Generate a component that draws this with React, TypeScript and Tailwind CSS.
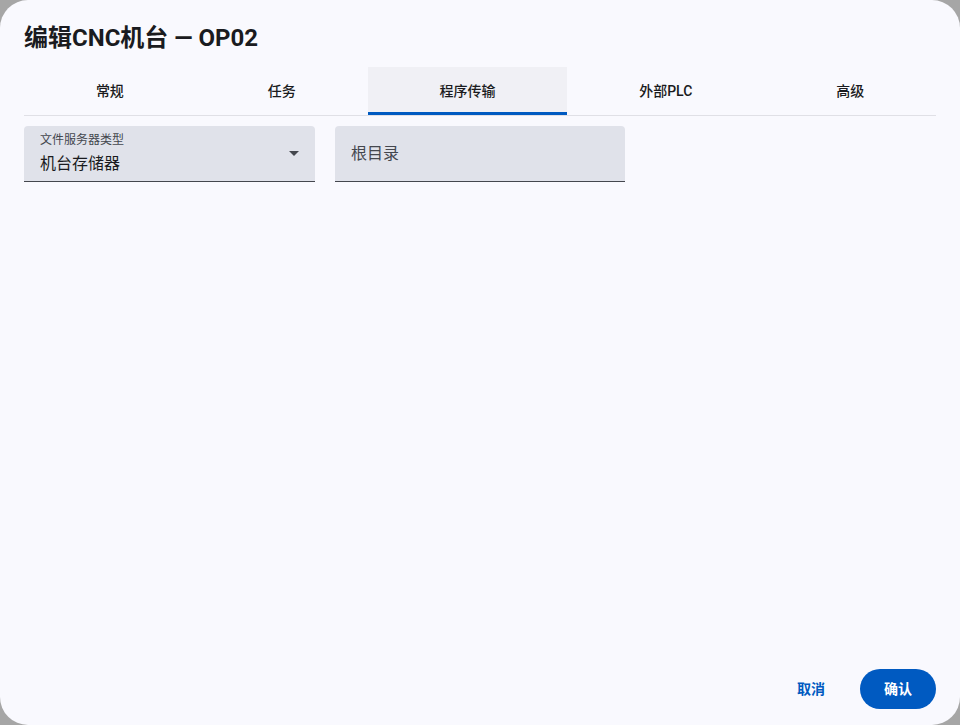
import React, { useState } from 'react';

const tabs = ['常规', '任务', '程序传输', '外部PLC', '高级'];

const font = { fontFamily: 'Roboto, "Noto Sans CJK SC", sans-serif' };

function SelectField({ label, value }: { label: string; value: string }) {
  return (
    <div className="relative w-[291px] h-14 rounded-t bg-[#e0e2ea] border-b border-[#44474e] px-4 pt-[6px]">
      <div className="text-xs leading-4 text-[#44474e]">{label}</div>
      <div className="text-base leading-6 text-[#1a1b20] mt-1">{value}</div>
      {/* dropdown caret */}
      <svg width="10" height="5" viewBox="0 0 10 5" className="absolute right-[16px] top-[25px]">
        <path d="M0 0 L10 0 L5 5 Z" fill="#44474e" />
      </svg>
    </div>
  );
}

function TextField({ placeholder }: { placeholder: string }) {
  return (
    <div className="w-[290px] h-14 rounded-t bg-[#e0e2ea] border-b border-[#44474e] px-4 flex items-center">
      <span className="text-base leading-6 text-[#44474e]">{placeholder}</span>
    </div>
  );
}

export default function App() {
  const [active, setActive] = useState(2);

  return (
    <div className="w-screen h-screen bg-[#a6a6a6]" style={font}>
      <div className="w-full h-full rounded-[28px] bg-[#f9f9fe] flex flex-col px-6 pt-[22px] pb-4">
        <h1 className="text-2xl leading-8 font-bold text-[#1a1b20]">编辑CNC机台 — OP02</h1>

        {/* Tabs */}
        <div className="mt-[13px] flex border-b border-[#e0e0e6]">
          {tabs.map((t, i) => (
            <button
              key={t}
              type="button"
              onClick={() => setActive(i)}
              className={`relative flex-auto h-12 text-sm font-medium text-[#1a1b20] ${
                i === active ? 'bg-[#f0f0f5]' : ''
              }`}
            >
              {t}
              {i === active && (
                <span className="absolute left-0 right-0 bottom-0 h-[3px] bg-[#005ac1]" />
              )}
            </button>
          ))}
        </div>

        <div className="mt-[10px] flex gap-5">
          <SelectField label="文件服务器类型" value="机台存储器" />
          <TextField placeholder="根目录" />
        </div>

        <div className="flex-1" />

        <div className="flex justify-end items-center gap-[11px]">
          <button type="button" className="h-10 px-6 rounded-full text-sm font-semibold text-[#005ac1]">
            取消
          </button>
          <button type="button" className="h-10 px-6 rounded-full text-sm font-semibold text-white bg-[#005ac1]">
            确认
          </button>
        </div>
      </div>
    </div>
  );
}
